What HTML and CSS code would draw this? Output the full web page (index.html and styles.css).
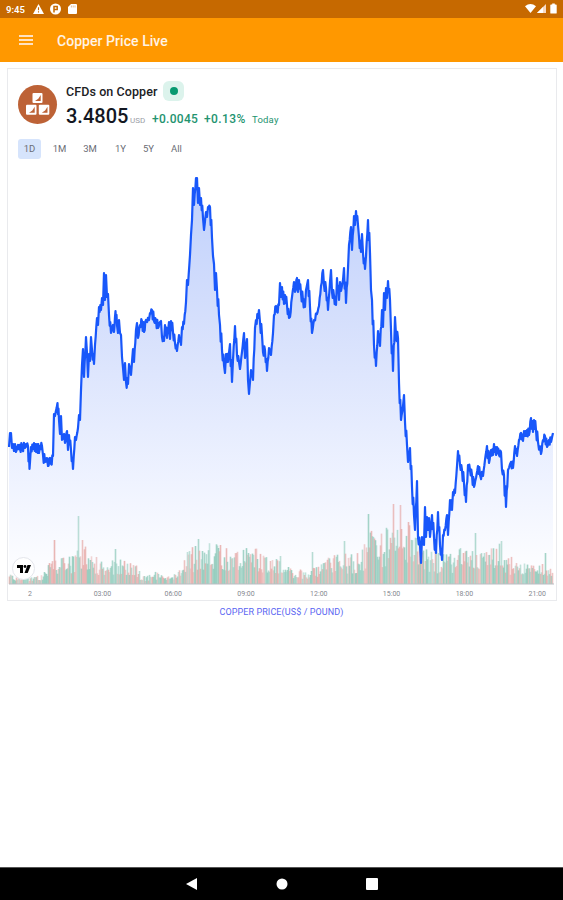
FILE: index.html
```html
<!DOCTYPE html>
<html lang="en">
<head>
<meta charset="utf-8">
<title>Copper Price Live</title>
<link rel="stylesheet" href="styles.css">
</head>
<body>
<div class="status">
  <span class="clock">9:45</span>
  <svg class="status-icons" width="46" height="12" viewBox="0 0 46 12">
    <path d="M5.500 1 11 11H0Z" fill="#fff"/><path d="M5.500 4.300v3M5.500 8.300v1.300" stroke="#c66900" stroke-width="1.100"/>
    <circle cx="22.500" cy="6" r="5.500" fill="#fff"/><path d="M21 9.500V3.600h3.200v2.800H21" fill="none" stroke="#c66900" stroke-width="1.500"/>
    <path d="M38 1h5q1 0 1 1v8q0 1-1 1h-7q-1 0-1-1V4Z" fill="#fff"/><path d="M38.400 2.500v2M40.200 2.500v2M42 2.500v2" stroke="#dfa66a" stroke-width=".7"/>
  </svg>
  <svg class="signal-icons" width="33" height="12" viewBox="0 0 33 12">
    <path d="M0 3.200Q5.500-1 11 3.200L5.500 10Z" fill="#fff"/>
    <path d="M21 1v9H12Z" fill="#f7d9c4"/><path d="M18 4v6h-6Z" fill="#fff"/>
    <path d="M26 1.600h1.200V.5h2.600v1.100H31q.7 0 .7.7v7.600q0 .7-.7.7h-5q-.7 0-.7-.7V2.300q0-.7.7-.7Z" fill="#fff"/>
  </svg>
</div>
<header class="appbar">
  <div class="menu"><i></i><i></i><i></i></div>
  <h1>Copper Price Live</h1>
</header>
<main class="card">
  <section class="quote">
    <svg class="logo" width="40" height="40" viewBox="0 0 40 40">
      <circle cx="19.500" cy="19.500" r="19.500" fill="#bd6236"/>
      <g fill="#fff"><rect x="14.500" y="8" width="10" height="10" rx="1"/><rect x="8" y="19.700" width="10.500" height="10" rx="1"/><rect x="20.800" y="19.700" width="10.500" height="10" rx="1"/></g>
      <g fill="#bd6236"><path d="M22.700 10v6H17l3.300-2.300Z"/><path d="M16.700 21.700v6H11l3.300-2.300Z"/><path d="M29.500 21.700v6h-5.700l3.300-2.300Z"/></g>
    </svg>
    <div class="info">
      <div class="name-row"><span class="name">CFDs on Copper</span><span class="badge"><i></i></span></div>
      <div class="price-row"><span class="price">3.4805</span><span class="unit">USD</span><span class="change">+0.0045</span><span class="pct">+0.13%</span><span class="today">Today</span></div>
    </div>
  </section>
  <nav class="ranges"><span class="active">1D</span><span>1M</span><span>3M</span><span>1Y</span><span>5Y</span><span>All</span></nav>
  <svg class="chart" width="548" height="421" viewBox="8 165 548 421">
    <defs><linearGradient id="area" gradientUnits="userSpaceOnUse" x1="0" y1="176" x2="0" y2="584">
      <stop offset="0" stop-color="#bfd0fc"/><stop offset=".35" stop-color="#d5dffc"/><stop offset=".75" stop-color="#eff3ff"/><stop offset="1" stop-color="#fff"/>
    </linearGradient></defs>
    <path id="fill" fill="url(#area)"/>
    <g id="volume"></g>
    <path d="M9 584H554" stroke="#b9bec3"/>
    <polyline id="price" fill="none" stroke="#1857fa" stroke-width="2.200" stroke-linejoin="round" points="9,447 10,433 11,433 12,448 13,444 14,451 15,444 16,452 18,445 20,449 22,446 25,448 26,444 28,446 29.500,469 31,447 33,449 34,443 36,452 37,444 39,453 40,446 42,446 43,455 45,462 47,458 48,466 50,458 51,464 53,456 54,414 55,416 57.500,403 59,420 60,434 61,416 62,440 64,434 65,443 67,431 68,450 69,435 71,450 73,469 75,437 76,440 78,428 79,415 80,420 81,390 82,365 83,349 84,377 86,337 87,353 88,377 89,354 90,361 91,337 92,350 94,364 95,345 97,318 98,325 99,307 101,310 102,298 103,305 104,273 105,300 106,275 107,297 108,294 109,315 111,333 113,325 114,332 115.500,311 117,325 118,333 119,320 120,333 121,335 122,357 123,368 124,380 125,363 126,382 128,384 129,364 131,375 133,349 134,362 136,330 137,323 138,338 140,325 142,321 144,332 146,320 149,320 150,313 152,310 154,321 156,320 158,328 160,322 161,321 162,337 164,341 165,325 167,338 169,322 170,339 171,321 173,332 175,343 177,351 179,335 181,345 182,327 184,324 186,302 187,280 188,285 190,255 191,235 192,220 193,188 194,205 196,178 197,178 198,203 199,188 200,205 201,198 203,218 204,230 206,212 207,217 208,207 210,207 212,238 213,256 214,264 215,290 216,273 217,290 219,315 220,325 222,350 224,365 225,373 226,354 228,362 230,344 232,382 233,360 235,326 237,355 239,362 240,369 242,352 244,333 245,358 247,339 248,380 249,394 251,370 253,380 255,328 256,320 258,318 259,310 260,322 262,335 263,352 265,350 267,371 269,348 271,355 273,333 274,315 276,306 277,312 279,305 280,283 281,297 282,287 284,304 285,295 287,305 289,318 290,317 292,297 294,282 295,292 297,278 298,292 299,280 301,293 303,300 305,307 306,290 308,280 310,307 312,333 314,320 317,314 319,306 321,286 323,270 324,285 326,288 328,310 330,282 331,270 332,292 334,296 336,305 337,278 339,300 340,282 341,291 343,280 344,268 346,303 348,268 349,245 351,227 352,250 354,216 355,225 356,211 358,225 359,237 361,252 362,234 363,253 365,269 366,256 368,220 370,253 371,290 372,300 374,345 376,366 378,331 380,346 382,310 383,327 384,293 385,310 386,288 387,298 388,281 390,300 391,330 393,371 395,317 396,335 398,338 399,383 401,420 403,406 404,395 405,422 407,445 408,462 410,448 412,487 414,515 415,530 417,481 418,537 420,545 421,563 422,537 424,545 425,507 426,537 427,517 428,530 429,518 430,537 432,515 434,537 436,553 438,512 440,545 442,560 443,535 445,530 447,515 448,535 450,500 452,510 453,492 455,493 457,466 458,451 460,465 462,470 464,483 466,502 468,465 470,470 472,475 474,487 476,478 478,466 480,475 483,476 485,460 487,446 489,463 491,450 493,455 494,444 496,455 497,447 499,455 501,452 502,470 504,475 506,507 508,470 511,462 513,468 515,446 517,456 519,440 521,433 523,441 524,431 526,436 527,430 529,435 531,418 533,432 534,420 536,430 538,442 541,454 543,440 545,436 547,447 549,440 551,442 553,433"/>
  </svg>
  <span class="tv"><svg width="14" height="8" viewBox="0 0 14 8"><path d="M0 0h6v8H3V3H0Z"/><circle cx="8" cy="1.500" r="1.400"/><path d="M10.500 0H14l-3.300 8H7.500Z"/></svg></span>
  <div class="axis"><span>2</span><span>03:00</span><span>06:00</span><span>09:00</span><span>12:00</span><span>15:00</span><span>18:00</span><span>21:00</span></div>
</main>
<p class="caption">COPPER PRICE(US$ / POUND)</p>
<footer class="navbar">
  <svg width="12" height="12" viewBox="0 0 12 12"><path d="M11 0v12L0 6Z" fill="#fff"/></svg>
  <svg width="12" height="12" viewBox="0 0 12 12"><circle cx="6" cy="6" r="5.500" fill="#fff"/></svg>
  <svg width="12" height="12" viewBox="0 0 12 12"><rect width="12" height="12" rx="1" fill="#fff"/></svg>
</footer>
<script src="script.js"></script>
</body>
</html>
```
FILE: styles.css
```css
* { box-sizing: border-box; }
body {
  margin: 0;
  height: 900px;
  display: flex;
  flex-direction: column;
  background: #fff;
  font-family: Roboto, "Liberation Sans", sans-serif;
  overflow: hidden;
}
svg { display: block; flex: none; }
.status {
  height: 18px;
  flex: none;
  display: flex;
  align-items: center;
  padding: 0 5px 0 6px;
  background: #c66900;
  color: #fff;
}
.clock { width: 27px; font-size: 9.5px; font-weight: 600; }
.signal-icons { margin-left: auto; }
.appbar {
  height: 44px;
  flex: none;
  display: flex;
  align-items: center;
  padding-left: 19px;
  background: #ff9800;
  color: #fff3e6;
}
.menu { width: 38px; display: grid; gap: 2px; margin-top: -1px; }
.menu i { width: 14px; height: 2px; background: #ffe1c2; }
h1 { margin: 2px 0 0; font-size: 14px; font-weight: 500; letter-spacing: .05px; white-space: nowrap; }
.card {
  position: relative;
  width: 550px;
  height: 533px;
  flex: none;
  margin: 6px 0 0 7px;
  border: 1px solid #e9eaed;
}
.quote { display: flex; gap: 8px; height: 61px; padding: 12px 0 0 10px; }
.logo { margin-top: 4px; }
.name-row { display: flex; align-items: center; height: 20px; gap: 6px; }
.name { font-size: 12.5px; font-weight: 500; color: #202124; letter-spacing: .08px; white-space: nowrap; }
.badge {
  width: 21px;
  height: 20px;
  display: grid;
  place-items: center;
  border-radius: 6px;
  background: #dcf3ec;
}
.badge i { width: 8px; height: 8px; border-radius: 50%; background: #089970; }
.price-row { display: flex; align-items: baseline; height: 28px; line-height: 30px; color: #23936f; white-space: nowrap; }
.price { width: 64px; font-size: 20px; font-weight: 500; color: #131722; }
.unit { width: 22px; font-size: 8px; color: #9a9da5; }
.change { width: 52px; font-size: 12px; font-weight: 500; letter-spacing: .3px; }
.pct { width: 48px; font-size: 12px; font-weight: 500; letter-spacing: .4px; }
.today { font-size: 9.500px; letter-spacing: .2px; }
.ranges { display: flex; height: 35px; padding: 9px 0 0 10px; gap: 7px; font-size: 9.5px; color: #6a6d75; }
.ranges span { width: 23px; height: 20px; line-height: 20px; text-align: center; border-radius: 3px; }
.ranges span:nth-child(3) { width: 24px; }
.ranges span:nth-child(n+5) { margin-left: -2px; }
.ranges .active { background: #d6e4fc; }
.tv {
  position: absolute;
  left: 4px;
  top: 488px;
  width: 23px;
  height: 23px;
  display: grid;
  place-items: center;
  border: 1px solid #e4e6ec;
  border-radius: 50%;
  background: #fff;
}
.axis { display: flex; padding-left: 4px; font-size: 7px; line-height: 17px; color: #85888f; }
.axis span { width: 72.800px; flex: none; text-align: center; }
.axis span:first-child { width: 36px; }
.axis span:nth-child(2) { margin-left: 18px; }
.axis span:nth-child(3) { margin-left: -2px; }
.caption { margin: 3px 0 0; text-align: center; font-size: 9px; line-height: 16px; letter-spacing: .1px; color: #5a66f2; }
.navbar {
  height: 33px;
  flex: none;
  margin-top: auto;
  display: flex;
  align-items: center;
  justify-content: center;
  gap: 78px;
  background: #000;
  border-top: 1px solid #555;
}
```
FILE: script.js
```js
let seed = 17;
const random = () => (seed = (seed * 16807) % 2147483647) / 2147483647;

// Intraday ticks between the quoted points give the line its texture.
const price = document.getElementById("price");
const quotes = price.getAttribute("points").split(" ").map(p => p.split(",").map(Number));
const ticks = [quotes[0]];
for (let i = 1; i < quotes.length; i++) {
  const [x0, y0] = quotes[i - 1], [x1, y1] = quotes[i];
  if (x1 - x0 > 1.4) {
    const jitter = 2 + random() * 5;
    ticks.push([x0 + (x1 - x0) * 0.35, y0 + (y1 - y0) * 0.5 + jitter * 0.7]);
    ticks.push([x0 + (x1 - x0) * 0.65, y0 + (y1 - y0) * 0.5 - jitter * 0.7]);
  }
  ticks.push([x1, y1]);
}
const line = ticks.map(p => p[0].toFixed(1) + "," + p[1].toFixed(1)).join(" ");
price.setAttribute("points", line);
document.getElementById("fill").setAttribute("d", "M9,584 L" + line + " L553,584 Z");

// [x, typical bar height]
const envelope = [[9, 8], [40, 7], [52, 20], [75, 26], [85, 30], [100, 18], [120, 20], [135, 16], [142, 6], [155, 10], [165, 5],
  [180, 12], [188, 28], [205, 33], [222, 30], [240, 25], [252, 36], [262, 22], [280, 23], [292, 12], [312, 13], [330, 22],
  [350, 24], [362, 28], [370, 42], [382, 42], [395, 46], [410, 50], [420, 34], [440, 24], [460, 28], [480, 25], [500, 32],
  [512, 20], [530, 14], [542, 20], [553, 16]];
const spikes = { 54: 44, 78: 68, 82: 44, 115: 35, 187: 32, 198: 45, 220: 39, 312: 32, 344: 43, 368: 70, 393: 80, 400: 79,
  408: 62, 475: 51, 501: 43, 545: 31 };
const level = x => {
  const i = Math.max(1, envelope.findIndex(p => p[0] >= x));
  const a = envelope[i - 1], b = envelope[i];
  return a[1] + (b[1] - a[1]) * (x - a[0]) / (b[0] - a[0]);
};
let bars = "";
for (let x = 9; x < 553; x++) {
  const h = spikes[x] || level(x) * (0.4 + random() * 0.9);
  const red = x === 393 || x === 400 || (x !== 78 && x !== 368 && random() < 0.47);
  const color = red ? "#e5a5a3" : "#86c6b5";
  bars += `<rect x="${x - 0.3}" y="${(584 - h).toFixed(1)}" width="1.6" height="${h.toFixed(1)}" fill="${color}" opacity="${(0.45 + random() * 0.35).toFixed(2)}"/>`;
}
document.getElementById("volume").innerHTML = bars;
```
